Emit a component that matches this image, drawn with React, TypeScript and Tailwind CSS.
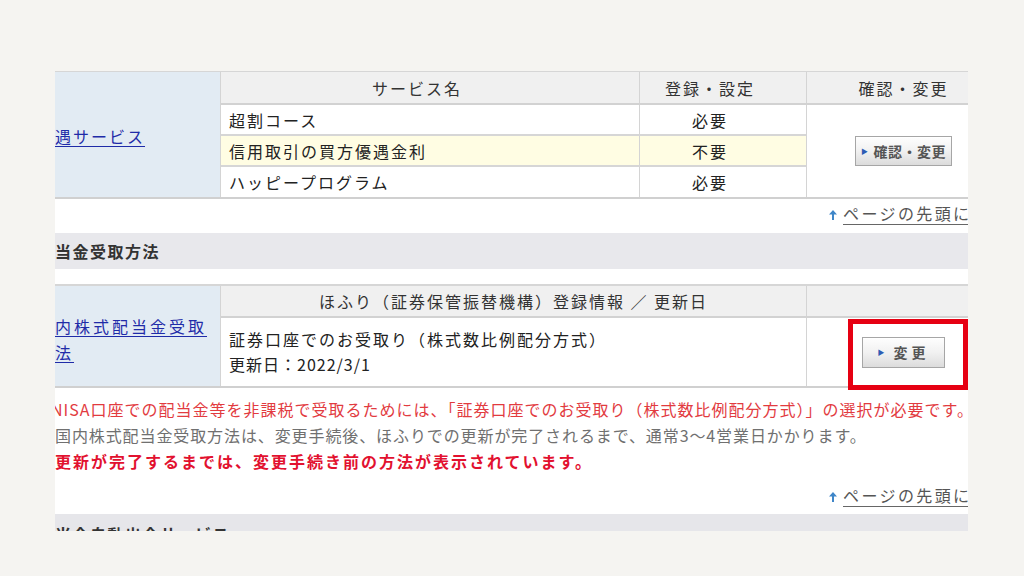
import React from "react";

function Btn({ label, w, h, tracking }: { label: string; w: string; h: string; tracking: string }) {
  return (
    <div
      className={`flex items-center justify-center gap-[5px] border border-[#a6a6a6] bg-linear-to-b from-[#fefefe] via-[#f1f1f1] to-[#dcdcdc] text-[#555] font-bold text-[14px] leading-none shadow-[inset_0_1px_0_#fff] ${w} ${h} ${tracking}`}
    >
      <span className="text-[#2d5cb4] text-[7px] leading-none">▶</span>
      <span>{label}</span>
    </div>
  );
}

function TopLink() {
  return (
    <div className="flex items-center pl-[774px] whitespace-nowrap">
      <svg width="8" height="10" viewBox="0 0 8 10" className="mr-[6px] mt-[3px]">
        <path d="M4 0 L8 4.5 L5 4.5 L5 10 L3 10 L3 4.5 L0 4.5 Z" fill="#3f86c8" />
      </svg>
      <span className="text-[16px] tracking-[2.4px] text-[#555] underline decoration-[#666] underline-offset-[4px]">
        ページの先頭に戻る
      </span>
    </div>
  );
}

export default function App() {
  return (
    <div className="w-[1024px] h-[576px] bg-[#f5f4f1] pt-[71px] pl-[55px] font-['Noto_Sans_CJK_JP','Noto_Sans',sans-serif]">
      <div className="w-[913px] h-[460px] overflow-hidden bg-white">
        <div className="w-[945px] flex flex-col">
          {/* Table 1 */}
          <div className="flex border-t border-[#d6d6d6] border-b-2 border-b-[#d0d0d0]">
            <div className="w-[165px] shrink-0 bg-[#e2ebf3] flex items-center">
              <a className="text-[16px] tracking-[2px] text-[#1f2ba8] underline underline-offset-[3px] whitespace-nowrap mt-[3px]">
                遇サービス
              </a>
            </div>
            <div className="flex-1 flex flex-col border-l border-[#d4d4d4]">
              <div className="flex h-[33px] bg-[#f0f0f0] border-b-2 border-[#d2d2d2] text-[16px] tracking-[2px] text-[#333]">
                <div className="w-[418px] flex items-center justify-center pr-[26px]">サービス名</div>
                <div className="w-[167px] flex items-center justify-center pr-[26px] border-l border-[#d4d4d4]">登録・設定</div>
                <div className="flex-1 flex items-center justify-center border-l border-[#d4d4d4]">確認・変更</div>
              </div>
              <div className="flex">
                <div className="flex flex-col text-[16px] tracking-[2px] text-[#222]">
                  <div className="flex h-[31px] border-b-2 border-[#d6d6d6]">
                    <div className="w-[418px] flex items-center pl-[8px]">超割コース</div>
                    <div className="w-[167px] flex items-center justify-center pr-[26px] border-l border-[#d4d4d4]">必要</div>
                  </div>
                  <div className="flex h-[31px] border-b-2 border-[#d6d6d6] bg-[#fffde3]">
                    <div className="w-[418px] flex items-center pl-[8px]">信用取引の買方優遇金利</div>
                    <div className="w-[167px] flex items-center justify-center pr-[26px] border-l border-[#d4d4d4]">不要</div>
                  </div>
                  <div className="flex h-[30px]">
                    <div className="w-[418px] flex items-center pl-[8px]">ハッピープログラム</div>
                    <div className="w-[167px] flex items-center justify-center pr-[26px] border-l border-[#d4d4d4]">必要</div>
                  </div>
                </div>
                <div className="flex-1 flex items-center justify-center border-l border-[#d4d4d4]">
                  <Btn label="確認・変更" w="w-[97px]" h="h-[30px]" tracking="tracking-[0.5px]" />
                </div>
              </div>
            </div>
          </div>

          {/* link */}
          <div className="h-[34px] flex items-center pb-[6px]">
            <TopLink />
          </div>

          {/* Section band */}
          <div className="h-[36px] bg-[#e8e8ec] flex items-center">
            <span className="text-[16px] font-bold tracking-[1.5px] text-[#333] whitespace-nowrap">当金受取方法</span>
          </div>

          <div className="h-[15px]" />

          {/* Table 2 */}
          <div className="flex border-t-2 border-[#d6d6d6] border-b-2 border-b-[#d0d0d0]">
            <div className="w-[165px] shrink-0 bg-[#e2ebf3] flex items-center">
              <a className="text-[16px] leading-[26px] tracking-[3px] text-[#1f2ba8] underline underline-offset-[3px] whitespace-nowrap mt-[5px]">
                内株式配当金受取
                <br />
                法
              </a>
            </div>
            <div className="flex-1 flex flex-col border-l border-[#d4d4d4]">
              <div className="flex h-[32px] bg-[#f0f0f0] border-b-2 border-[#d2d2d2] text-[16px] tracking-[2px] text-[#333]">
                <div className="w-[585px] flex items-center justify-center whitespace-nowrap">
                  ほふり（証券保管振替機構）登録情報 ／ 更新日
                </div>
                <div className="flex-1 border-l border-[#d4d4d4]" />
              </div>
              <div className="flex h-[68px]">
                <div className="w-[585px] flex flex-col justify-center pl-[8px] text-[16px] leading-[25px] tracking-[2px] text-[#222] whitespace-nowrap">
                  <div>証券口座でのお受取り（株式数比例配分方式）</div>
                  <div className="tracking-[1px]">更新日：2022/3/1</div>
                </div>
                <div className="relative flex-1 flex items-center justify-center border-l border-[#d4d4d4]">
                  <Btn label="変更" w="w-[83px]" h="h-[31px]" tracking="tracking-[4px]" />
                  <div className="absolute left-[41px] top-[1px] w-[120px] h-[71px] border-[5px] border-[#e60012]" />
                </div>
              </div>
            </div>
          </div>

          {/* Notes */}
          <div className="mt-[8px] flex flex-col text-[16px] leading-[26px] whitespace-nowrap">
            <div className="text-[#e23b3f] tracking-[1px] -ml-[4px]">
              NISA口座での配当金等を非課税で受取るためには、「証券口座でのお受取り（株式数比例配分方式）」の選択が必要です。
            </div>
            <div className="text-[#707070] tracking-[0.9px]">
              国内株式配当金受取方法は、変更手続後、ほふりでの更新が完了されるまで、通常3～4営業日かかります。
            </div>
            <div className="text-[#e2112f] font-bold tracking-[2px]">
              更新が完了するまでは、変更手続き前の方法が表示されています。
            </div>
          </div>

          {/* link */}
          <div className="h-[40px] flex items-center pt-[2px]">
            <TopLink />
          </div>

          {/* bottom band */}
          <div className="h-[40px] bg-[#e6e6ea] pt-[8px]">
            <span className="text-[16px] font-bold tracking-[1.5px] text-[#333] whitespace-nowrap">当金自動出金サービス</span>
          </div>
        </div>
      </div>
    </div>
  );
}
